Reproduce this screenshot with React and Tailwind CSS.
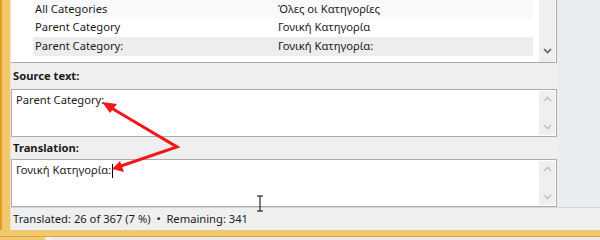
import React from "react";

const font = { fontFamily: '"Segoe UI", "Noto Sans", sans-serif' };

function Chev({ up, color }) {
  return (
    <svg width="9" height="6" viewBox="0 0 9 6">
      <path d={up ? "M1 5 L4.5 1.5 L8 5" : "M1 1 L4.5 4.5 L8 1"} fill="none" stroke={color} strokeWidth="1.6" />
    </svg>
  );
}

function TextBox({ children }) {
  return (
    <div className="flex h-[48px] border border-[#acacac] bg-white">
      <div className="flex-1 px-[4px] pt-[2px] text-[11.2px] text-[#1b1b1b]">{children}</div>
      <div className="mr-[1px] my-[1px] flex w-[16px] flex-col items-center justify-between bg-[#efefef] py-[5px]">
        <Chev up color="#c4c4c4" />
        <Chev color="#c4c4c4" />
      </div>
    </div>
  );
}

export default function App() {
  const rows = [
    ["All Categories", "Όλες οι Κατηγορίες", "bg-[#f9f9fb]"],
    ["Parent Category", "Γονική Κατηγορία", "bg-white"],
    ["Parent Category:", "Γονική Κατηγορία:", "bg-[#ededed]"],
  ];
  return (
    <div className="relative flex h-[240px] w-[600px] flex-col overflow-hidden bg-[#efefef]" style={font}>
      <div className="flex h-[230px]">
        <div className="w-[11px] border-l-2 border-[#e49d1c] bg-[#f1c86e] border-r border-r-[#f7e3b6]" />
        <div className="flex flex-1 flex-col">
          <div className="flex h-[207px]">
            <div className="flex w-[546px] flex-col">
              <div className="flex h-[63px] border-b border-r border-[#a9a9a9] bg-white">
                <div className="flex-1 pl-[22px] pr-[6px]">
                  {rows.map(([a, b, bg]) => (
                    <div key={a} className={`flex h-[18.5px] items-center text-[11.2px] text-[#1b1b1b] ${bg}`}>
                      <span className="w-[245px] pl-[2px]">{a}</span>
                      <span>{b}</span>
                    </div>
                  ))}
                </div>
                <div className="mr-[1px] flex w-[16px] flex-col items-center justify-end bg-[#efefef] pb-[8px]">
                  <Chev color="#5f5f55" />
                </div>
              </div>
              <div className="flex h-[26px] items-center pl-[2px] text-[11.2px] font-bold text-[#1b1b1b]">Source text:</div>
              <TextBox>Parent Category:</TextBox>
              <div className="flex h-[22px] items-center pl-[2px] text-[11.2px] font-bold text-[#1b1b1b]">Translation:</div>
              <TextBox>
                <span>Γονική Κατηγορία:</span>
                <span className="ml-[1px] inline-block h-[14px] w-[1px] bg-black align-middle" />
              </TextBox>
            </div>
            <div className="flex-1 bg-[#e9ecf1]" />
          </div>
          <div className="flex h-[23px] items-center border-t border-[#d6d6d6] pl-[2px] text-[11.2px] text-[#1b1b1b]">
            Translated: 26 of 367 (7 %) &nbsp;•&nbsp; Remaining: 341
          </div>
        </div>
      </div>
      <div className="h-[7px] border-b border-[#d9a440] bg-[#f1c86e]" />
      <div className="flex flex-1">
        <div className="w-[45px] bg-[#f1c86e]" />
        <div className="w-[5px] bg-[#efefef]" />
        <div className="w-[1px] bg-white" />
        <div className="flex-1 bg-[#e9e9e9]" />
      </div>
      <svg className="pointer-events-none absolute left-0 top-0" width="600" height="240">
        <polyline points="108,106 177,147 118,167" fill="none" stroke="#f01818" strokeWidth="3" strokeLinejoin="miter" />
        <polygon points="102,102 117,104 110,113" fill="#f01818" />
        <polygon points="112,169 120,161 124,172" fill="#f01818" />
        <path d="M257 196 H263 M260 196 V211 M257 211 H263" stroke="#000" strokeWidth="1" fill="none" />
      </svg>
    </div>
  );
}
